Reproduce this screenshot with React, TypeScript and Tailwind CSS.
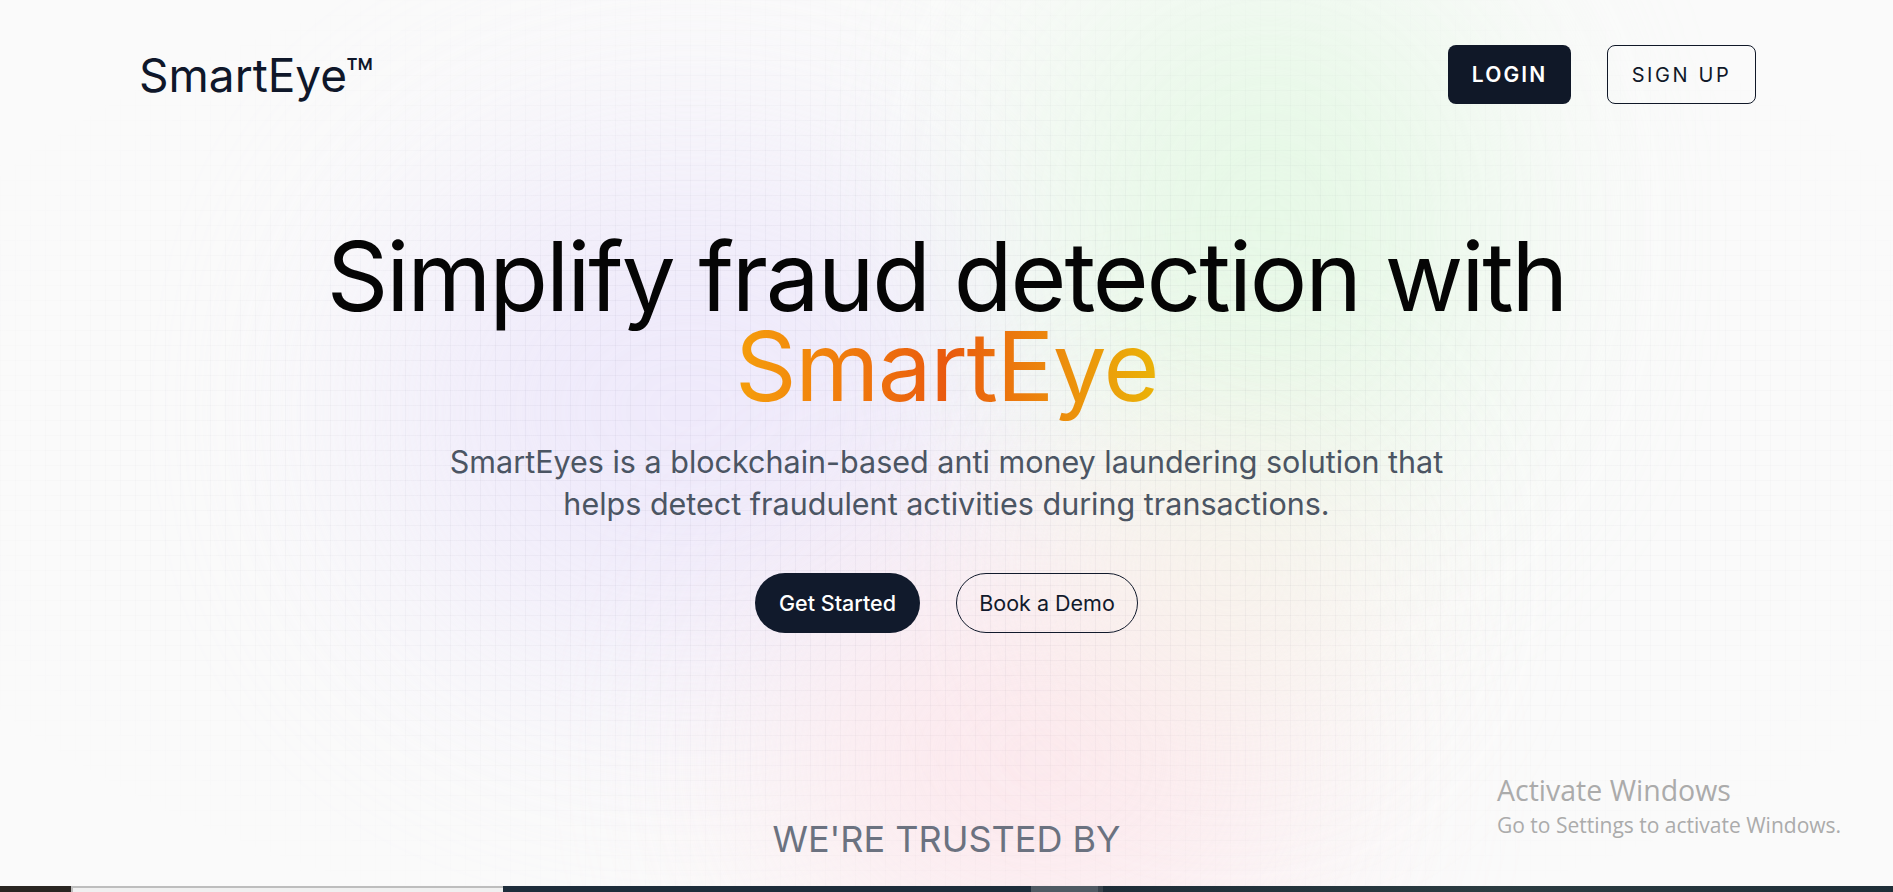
import React from "react";

export default function App() {
  return (
    <div className="w-full bg-[#fafafa] font-['Inter','Noto_Sans',sans-serif]">
      <section className="relative h-[886px] w-full overflow-hidden">
        {/* soft colour blobs */}
        <div className="pointer-events-none absolute inset-0">
          <div className="absolute left-[380px] top-[150px] h-[520px] w-[620px] rounded-full bg-[#ece6fb] opacity-80 blur-[110px]" />
          <div className="absolute left-[1050px] top-[-40px] h-[540px] w-[440px] rounded-full bg-[#e4f8e4] opacity-90 blur-[110px]" />
          <div className="absolute left-[780px] top-[560px] h-[400px] w-[520px] rounded-full bg-[#fde4ea] opacity-80 blur-[110px]" />
          <div className="absolute left-[1080px] top-[420px] h-[300px] w-[300px] rounded-full bg-[#f7f1e6] opacity-70 blur-[100px]" />
        </div>
        {/* grid */}
        <div className="pointer-events-none absolute inset-0 bg-[linear-gradient(to_right,rgba(60,60,90,0.04)_1px,transparent_1px),linear-gradient(to_bottom,rgba(60,60,90,0.04)_1px,transparent_1px)] bg-[size:15px_15px] [mask-image:radial-gradient(ellipse_at_center,black_35%,transparent_85%)]" />

        <div className="relative flex flex-col">
          <header className="flex items-center justify-between pl-[139px] pr-[137px] pt-[45px]">
            <div className="text-[46px] leading-none text-[#0f172a]">SmartEye™</div>
            <div className="flex items-center gap-[36px]">
              <button className="flex h-[59px] w-[123px] items-center justify-center rounded-[8px] bg-[#101828] text-[21px] font-semibold tracking-[0.1em] text-white">
                LOGIN
              </button>
              <button className="flex h-[59px] w-[149px] items-center justify-center rounded-[8px] border border-[#101828] text-[20px] tracking-[0.13em] text-[#101828]">
                SIGN UP
              </button>
            </div>
          </header>

          <main className="mt-[127px] flex flex-col items-center text-center">
            <h1 className="text-[96px] font-normal leading-[90px] tracking-[-0.022em] text-[#050505]">
              Simplify fraud detection with
              <br />
              <span className="bg-gradient-to-r from-[#f59e0b] via-[#e9590e] to-[#eab308] bg-clip-text tracking-[-0.015em] text-transparent">
                SmartEye
              </span>
            </h1>
            <p className="mt-[30px] w-[1010px] text-[30.5px] leading-[42px] text-[#4b5563]">
              SmartEyes is a blockchain-based anti money laundering solution that helps detect fraudulent activities during transactions.
            </p>
            <div className="mt-[48px] flex items-center gap-[36px]">
              <button className="flex h-[60px] w-[165px] items-center justify-center rounded-full bg-[#111a2c] text-[21.5px] font-medium text-white">
                Get Started
              </button>
              <button className="flex h-[60px] w-[182px] items-center justify-center rounded-full border border-[#111a2c] text-[21.5px] text-[#111a2c]">
                Book a Demo
              </button>
            </div>
            <h2 className="mt-[186px] text-[36px] leading-[40px] text-[#6b7280]">WE'RE TRUSTED BY</h2>
          </main>
        </div>

        {/* Windows watermark */}
        <div className="pointer-events-none absolute left-[1497px] top-[771px] font-['Open_Sans','Noto_Sans',sans-serif] text-[#ababab]">
          <div className="text-[28.5px] leading-[38px]">Activate Windows</div>
          <div className="mt-[2px] text-[21px] leading-[28px]">Go to Settings to activate Windows.</div>
        </div>
      </section>

      {/* top edge of next section */}
      <div className="flex h-[40px] w-full">
        <div className="w-[71px] bg-[#2a2622]" />
        <div className="w-[432px] border-l-2 border-t-2 border-[#bdbdbd] bg-[#f0f0f0]" />
        <div className="w-[528px] bg-[#1e2d3b]" />
        <div className="w-[67px] bg-[#4f5a63]" />
        <div className="w-[5px] bg-[#38434c]" />
        <div className="flex-1 bg-gradient-to-r from-[#1e2d38] via-[#2b3c41] to-[#1e2e38]" />
      </div>
    </div>
  );
}
